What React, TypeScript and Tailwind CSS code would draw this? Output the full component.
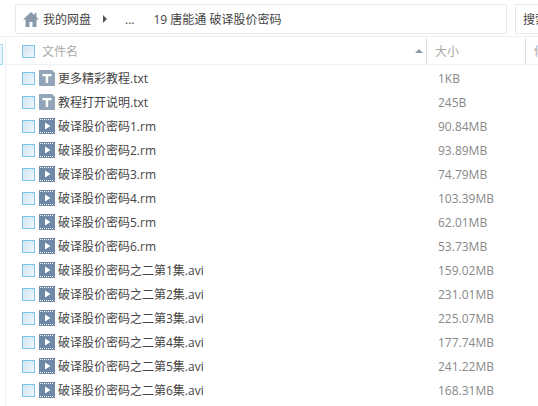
const files = [
  { name: "更多精彩教程.txt", size: "1KB", type: "text" },
  { name: "教程打开说明.txt", size: "245B", type: "text" },
  { name: "破译股价密码1.rm", size: "90.84MB", type: "video" },
  { name: "破译股价密码2.rm", size: "93.89MB", type: "video" },
  { name: "破译股价密码3.rm", size: "74.79MB", type: "video" },
  { name: "破译股价密码4.rm", size: "103.39MB", type: "video" },
  { name: "破译股价密码5.rm", size: "62.01MB", type: "video" },
  { name: "破译股价密码6.rm", size: "53.73MB", type: "video" },
  { name: "破译股价密码之二第1集.avi", size: "159.02MB", type: "video" },
  { name: "破译股价密码之二第2集.avi", size: "231.01MB", type: "video" },
  { name: "破译股价密码之二第3集.avi", size: "225.07MB", type: "video" },
  { name: "破译股价密码之二第4集.avi", size: "177.74MB", type: "video" },
  { name: "破译股价密码之二第5集.avi", size: "241.22MB", type: "video" },
  { name: "破译股价密码之二第6集.avi", size: "168.31MB", type: "video" },
];

function Check() {
  return <div className="w-[13px] h-[13px] shrink-0 border border-[#7cc4ec] bg-gradient-to-br from-[#cfe3f3] to-[#f2f8fc]" />;
}

function TextIcon() {
  return (
    <svg width="16" height="16" viewBox="0 0 16 16" className="shrink-0 block">
      <path d="M0 0h13l3 3v13H0z" fill="#93a6b9" />
      <path d="M3.5 4h9v2.2H9.2V13H6.8V6.2H3.5z" fill="#fff" />
    </svg>
  );
}

function VideoIcon() {
  return (
    <svg width="16" height="16" viewBox="0 0 16 16" className="shrink-0 block">
      <rect width="16" height="16" fill="#6f88a8" />
      <path d="M1 1.5h14M1 14.5h14" stroke="#fff" strokeWidth="1" strokeDasharray="1 1" />
      <path d="M6 4.5l5.5 3.5L6 11.5z" fill="#fff" />
    </svg>
  );
}

export default function App() {
  return (
    <div
      className="w-[538px] h-[406px] overflow-hidden bg-white text-[12px] text-[#444]"
      style={{ fontFamily: '"Open Sans", "Noto Sans CJK SC", sans-serif' }}
    >
      <div className="flex h-[37px] pt-[4px] pl-[15px] gap-[8px] border-b border-[#eef0f4]">
        <div className="w-[492px] h-[30px] flex items-center pl-[7px] border border-[#e6e8ec] rounded-[2px]">
          <svg width="16" height="15" viewBox="0 0 16 15" className="shrink-0">
            <path d="M8 0L0 7.5h2.5V15h4v-5h3v5h4V7.5H16l-2.5-2.4V1h-2v2.2z" fill="#8a9aa8" />
          </svg>
          <span className="ml-[4px] pt-[1px]">我的网盘</span>
          <span className="ml-[12px] w-0 h-0 border-y-[4px] border-y-transparent border-l-[4px] border-l-[#555]" />
          <span className="ml-[18px] pt-[1px]">...</span>
          <span className="ml-[19px] pt-[1px]">19 唐能通 破译股价密码</span>
        </div>
        <div className="flex-1 h-[30px] flex items-center pl-[7px] pt-[1px] border border-[#e6e8ec] rounded-l-[2px] border-r-0 whitespace-nowrap overflow-hidden">
          搜索
        </div>
      </div>
      <div className="flex h-[369px]">
        <div className="w-[6px] shrink-0 pt-[7px] border-r border-[#eef0f4]">
          <div className="w-[3px] h-[21px] border border-l-0 border-[#a8d8f4] bg-[#e6f4fd]" />
        </div>
        <div className="flex-1 min-w-0">
          <div className="flex h-[28px] pt-[1px] border-b border-[#eef0f4] text-[#aaa]">
            <div className="w-[420px] flex items-center pl-[16px]">
              <Check />
              <span className="ml-[7px] pt-[2px]">文件名</span>
              <span className="ml-auto mr-[3px] w-0 h-0 border-x-[4px] border-x-transparent border-b-[4px] border-b-[#8a97a6]" />
            </div>
            <div className="w-[100px] flex items-center pl-[8px] pt-[2px] border-x border-[#dcdcdc]">大小</div>
            <div className="flex-1 flex items-center pl-[8px] pt-[2px] overflow-hidden whitespace-nowrap">修改</div>
          </div>
          <div className="pt-[1px]">
            {files.map((f) => (
              <div key={f.name} className="flex items-center h-[24px]">
                <div className="w-[421px] flex items-center pl-[16px]">
                  <Check />
                  <div className="ml-[4px]">{f.type === "text" ? <TextIcon /> : <VideoIcon />}</div>
                  <span className="ml-[3px] pt-[1px] whitespace-nowrap">{f.name}</span>
                </div>
                <div className="pl-[11px] pt-[1px] text-[#888]">{f.size}</div>
              </div>
            ))}
          </div>
        </div>
      </div>
    </div>
  );
}
